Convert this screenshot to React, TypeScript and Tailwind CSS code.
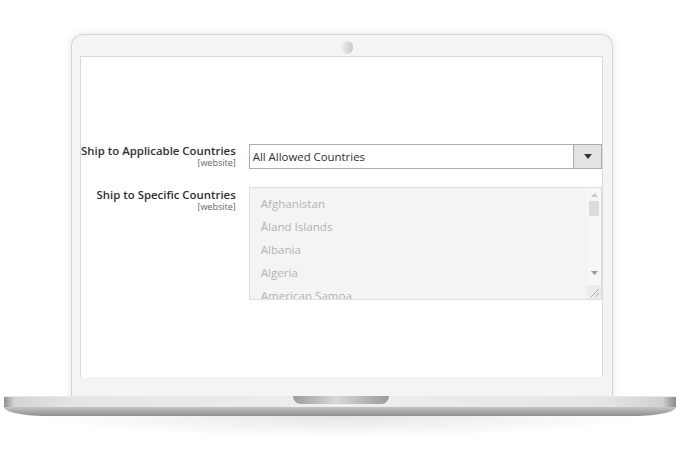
import React from "react";

const countries = ["Afghanistan", "Åland Islands", "Albania", "Algeria", "American Samoa"];

export default function App() {
  return (
    <div className="w-[680px] h-[450px] bg-white overflow-hidden relative" style={{ fontFamily: '"Open Sans", "Liberation Sans", sans-serif' }}>
      {/* Lid */}
      <div className="ml-[71px] mt-[34px] w-[542px] h-[362px] rounded-t-[12px] bg-[#f4f4f4] border border-b-0 border-[#d4d4d4] shadow-[0_0_10px_rgba(0,0,0,0.10)] flex flex-col items-stretch pl-[8px] pr-[9px] pt-[21px] relative">
        <div className="absolute left-[269px] top-[6px] w-[12px] h-[13px] rounded-full bg-[linear-gradient(90deg,#f0f0f0,#c8c8c8)]" />
        <div className="h-[321px] bg-white border-t border-x border-[#dadada] flex flex-col pt-[87px] text-[#303030]">
          {/* Row 1 */}
          <div className="flex items-start">
            <div className="w-[155px] flex flex-col items-end whitespace-nowrap">
              <span className="text-[11.4px] font-semibold leading-[14px]">Ship to Applicable Countries</span>
              <span className="text-[9px] text-[#666] leading-[10px]">[website]</span>
            </div>
            <div className="ml-[13px] w-[354px] h-[25px] border border-[#adadad] bg-white flex items-center">
              <span className="flex-1 pl-[3px] text-[11.4px] text-[#303030]">All Allowed Countries</span>
              <div className="w-[28px] h-full bg-[#e3e3e3] border-l border-[#adadad] flex items-center justify-center">
                <svg width="8" height="5" viewBox="0 0 8 5"><path d="M0 0H8L4 5Z" fill="#333" /></svg>
              </div>
            </div>
          </div>
          {/* Row 2 */}
          <div className="flex items-start mt-[18px]">
            <div className="w-[155px] flex flex-col items-end pt-[1px] whitespace-nowrap">
              <span className="text-[11.4px] font-semibold leading-[14px]">Ship to Specific Countries</span>
              <span className="text-[9px] text-[#666] leading-[10px]">[website]</span>
            </div>
            <div className="ml-[13px] w-[354px] h-[113px] border border-[#dedede] bg-[#f4f4f4] flex relative overflow-hidden">
              <div className="flex-1 pl-[11px] pt-[4px] flex flex-col">
                {countries.map((c) => (
                  <div key={c} className="h-[23px] shrink-0 text-[11.6px] text-[#b3b3b3] leading-[23px] whitespace-nowrap">{c}</div>
                ))}
              </div>
              <div className="w-[14px] bg-[#f7f7f7] flex flex-col items-center pt-[5px] relative">
                <svg width="7" height="4" viewBox="0 0 7 4"><path d="M0 4H7L3.5 0Z" fill="#c8c8c8" /></svg>
                <div className="w-[10px] h-[15px] bg-[#dcdcdc] mt-[4px]" />
                <div className="mt-[55px]">
                  <svg width="7" height="4" viewBox="0 0 7 4"><path d="M0 0H7L3.5 4Z" fill="#9a9a9a" /></svg>
                </div>
                <div className="absolute bottom-0 left-0 w-[14px] h-[14px] bg-[#ececec]">
                  <svg width="14" height="14" viewBox="0 0 14 14"><path d="M12 4L4 12M12 8L8 12" stroke="#a0a0a0" strokeWidth="0.8" /></svg>
                </div>
              </div>
            </div>
          </div>
        </div>
      </div>
      {/* Base */}
      <div className="ml-[4px] w-[672px] h-[20px] relative">
        <div className="h-[11px] bg-[linear-gradient(90deg,#8e8e8e_0%,#d4d4d4_1.5%,#e4e4e4_10%,#efefef_50%,#e4e4e4_90%,#d0d0d0_98%,#8a8a8a_100%)] border-t border-[#e8e8e8]" />
        <div className="h-[9px] rounded-b-[40px_9px] bg-[linear-gradient(180deg,#c4c4c4,#8f8f8f)]" />
        <div className="absolute left-[289px] top-0 w-[96px] h-[8px] rounded-b-[8px] bg-[linear-gradient(90deg,#9c9c9c,#d8d8d8_45%,#bcbcbc_70%,#9a9a9a)]" />
      </div>
      <div className="mx-[30px] h-[22px] rounded-b-[50%] bg-[radial-gradient(ellipse_at_top,rgba(0,0,0,0.10),rgba(0,0,0,0)_70%)]" />
    </div>
  );
}
